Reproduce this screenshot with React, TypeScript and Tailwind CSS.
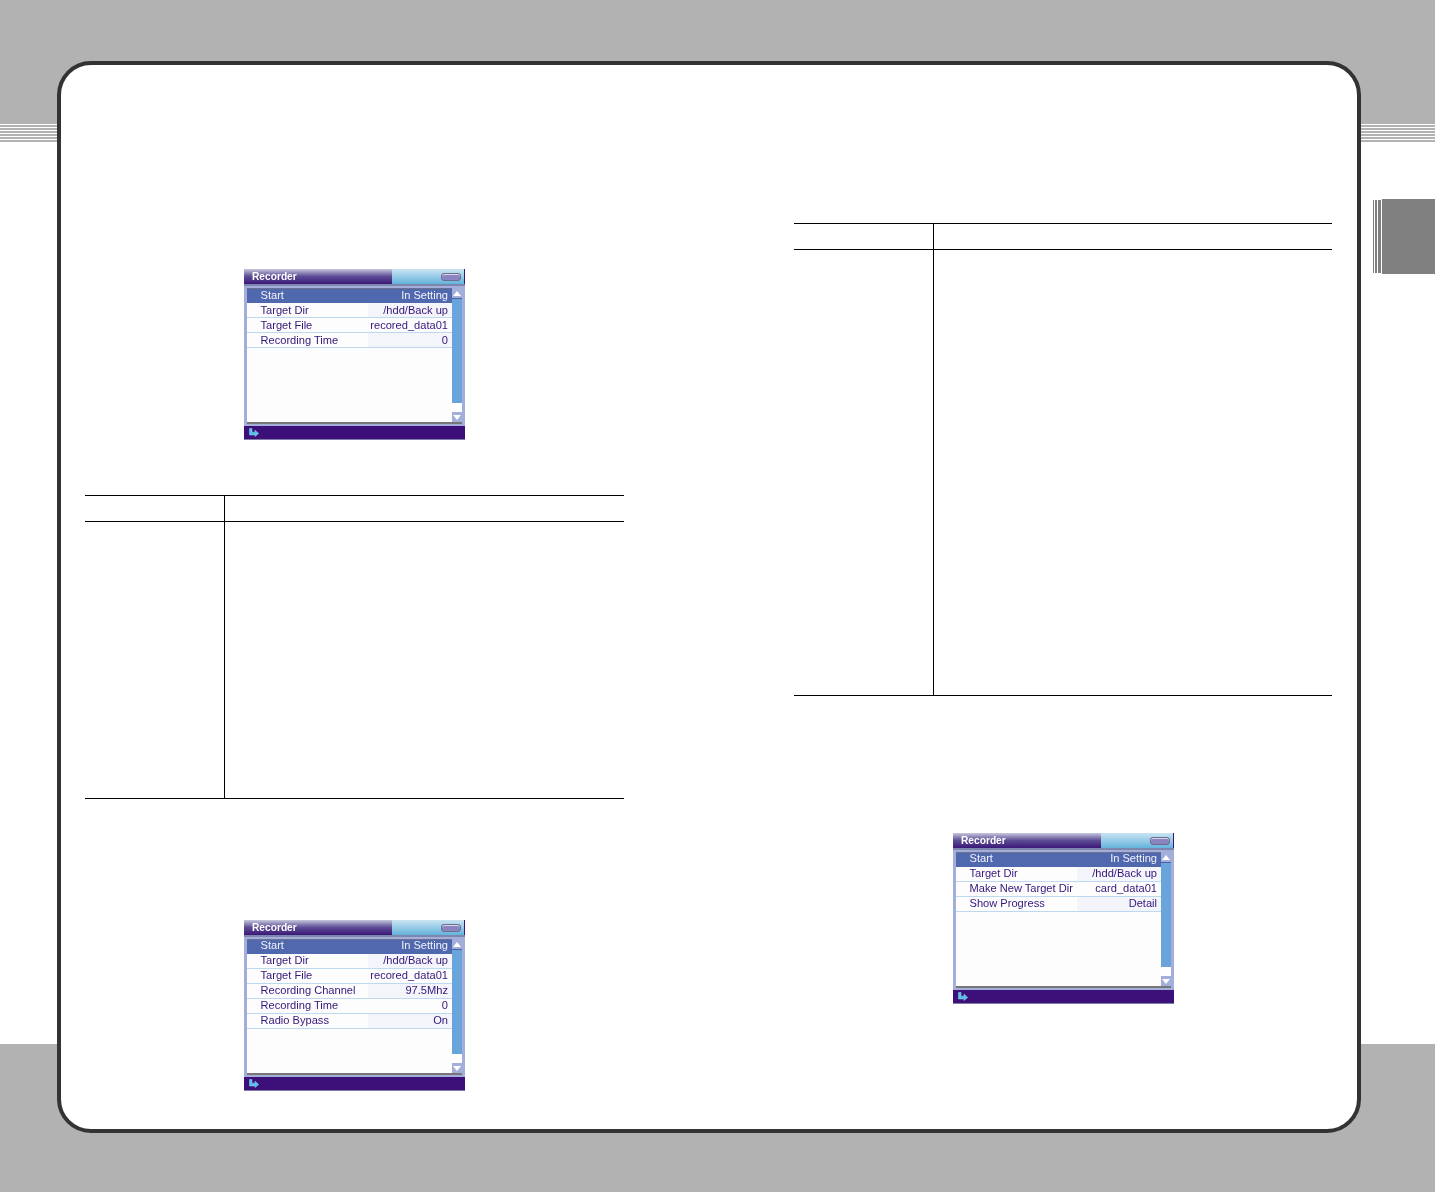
import React from "react";

type Row = [string, string];

function ArrowIcon() {
  return (
    <svg width="10" height="9" viewBox="0 0 10 9" className="shrink-0">
      <path d="M0.5 0.5H3V4.2H6V2.2L9.7 5.4L6 8.5V7H0.5Z" fill="#58c0ea" stroke="#8fd8f2" strokeWidth="0.5" />
    </svg>
  );
}

function Battery() {
  return (
    <div className="w-[20px] h-[8px] rounded-[3px] border border-[#6d6d8d] bg-[#8a84c0] shadow-[inset_0_1px_0_#d8d8ea]" />
  );
}

function ScrollArrow({ up }: { up: boolean }) {
  return (
    <div className="h-[10px] w-[10px] bg-[#a3aeda] flex items-center justify-center">
      <svg width="8" height="5" viewBox="0 0 8 5">
        <path d={up ? "M4 0L8 5H0Z" : "M0 0H8L4 5Z"} fill="#ffffff" />
      </svg>
    </div>
  );
}

function Screen({ rows, lower = false }: { rows: Row[]; lower?: boolean }) {
  const leading = lower ? "leading-[14px]" : "leading-[13px]";
  return (
    <div className="w-[221px] h-[171px] flex flex-col bg-[#a3aeda] ml-[159px] font-['Liberation_Sans',Arial,sans-serif] blur-[0.4px]">
      <div className="h-[15px] flex shrink-0">
        <div className="w-[148px] pl-[8px] bg-gradient-to-b from-[#c8c8dc] via-[#5d4b94] to-[#3c1578] text-white font-bold text-[10.2px] leading-[16px]">
          Recorder
        </div>
        <div className="flex-1 flex items-center justify-end pr-[3px] bg-gradient-to-b from-[#c9e4f2] to-[#62b3dc] border-r border-[#3c1578]">
          <Battery />
        </div>
      </div>
      <div className="h-[2px] shrink-0 bg-[#7d86ad]" />
      <div className="mx-[1px] h-[138px] shrink-0 border-l border-r border-[#a3aeda] pl-[1px] pr-[1px] pt-[2px]">
        <div className="h-[135px] bg-[#fdfdfd] flex border-b border-[#777] shadow-[0_1px_0_#777]">
          <div className="w-[205px] flex flex-col">
            {rows.map(([label, value], i) => {
              const selected = i === 0;
              const shaded = i % 2 === 1;
              return (
                <div
                  key={label}
                  className={
                    (selected
                      ? "h-[15px] flex bg-[#4f68ae] text-[#f2f2fa] text-[11.1px] shadow-[inset_0_1px_0_#6a7090] "
                      : "h-[15px] flex border-b border-[#bcd9f0] text-[#35157a] text-[11.1px] ") + leading
                  }
                >
                  <div className="w-[121px] pl-[13.5px] whitespace-nowrap">{label}</div>
                  <div className={shaded ? "flex-1 bg-[#f3f5fb] pr-[4px] text-right whitespace-nowrap" : "flex-1 pr-[4px] text-right whitespace-nowrap"}>
                    {value}
                  </div>
                </div>
              );
            })}
          </div>
          <div className="w-[10px] flex flex-col">
            <ScrollArrow up />
            <div className="h-[105px] bg-[#69a5da] border-t border-[#4d5fa5]" />
            <div className="h-[9px] bg-white" />
            <ScrollArrow up={false} />
          </div>
        </div>
      </div>
      <div className="mt-auto h-[14px] shrink-0 bg-[#3d0f78] flex items-center pl-[5px] pb-[1px] border-b border-[#7d7da5]">
        <ArrowIcon />
      </div>
    </div>
  );
}

function BlankTable({ height, width }: { height: string; width: string }) {
  return (
    <div className={`${width} flex flex-col border-t border-b border-black ${height}`}>
      <div className="h-[26px] shrink-0 flex border-b border-black">
        <div className="w-[140px] border-r border-black" />
        <div className="flex-1" />
      </div>
      <div className="flex-1 flex">
        <div className="w-[140px] border-r border-black" />
        <div className="flex-1" />
      </div>
    </div>
  );
}

export default function App() {
  return (
    <div className="relative w-[1435px] h-[1192px] overflow-hidden bg-white flex flex-col">
      <div className="h-[124px] shrink-0 bg-[#b2b2b2]" />
      <div className="h-[19px] shrink-0 bg-[repeating-linear-gradient(to_bottom,#ffffff_0px,#ffffff_1px,#b2b2b2_1px,#b2b2b2_3px)]" />
      <div className="flex-1" />
      <div className="h-[148px] shrink-0 bg-[#b2b2b2]" />

      <div className="absolute left-[57px] top-[61px] w-[1304px] h-[1072px] bg-white border-4 border-[#333333] rounded-[34px] pl-[24px] flex gap-[170px]">
        <div className="w-[539px] pt-[204px] flex flex-col">
          <Screen
            lower
            rows={[
              ["Start", "In Setting"],
              ["Target Dir", "/hdd/Back up"],
              ["Target File", "recored_data01"],
              ["Recording Time", "0"],
            ]}
          />
          <div className="mt-[55px]">
            <BlankTable height="h-[304px]" width="w-[539px]" />
          </div>
          <div className="mt-[121px]">
            <Screen
              rows={[
                ["Start", "In Setting"],
                ["Target Dir", "/hdd/Back up"],
                ["Target File", "recored_data01"],
                ["Recording Channel", "97.5Mhz"],
                ["Recording Time", "0"],
                ["Radio Bypass", "On"],
              ]}
            />
          </div>
        </div>
        <div className="w-[539px] pt-[158px] flex flex-col">
          <BlankTable height="h-[473px]" width="w-[538px]" />
          <div className="mt-[137px]">
            <Screen
              rows={[
                ["Start", "In Setting"],
                ["Target Dir", "/hdd/Back up"],
                ["Make New Target Dir", "card_data01"],
                ["Show Progress", "Detail"],
              ]}
            />
          </div>
        </div>
      </div>

      <div className="absolute left-[1373px] top-[199px] w-[62px] h-[75px] flex items-stretch">
        <div className="w-[1px] my-[1px] bg-[#808080]" />
        <div className="w-[2px] my-[1px] ml-[1px] bg-[#808080]" />
        <div className="w-[3px] my-[1px] ml-[1px] bg-[#808080]" />
        <div className="flex-1 ml-[1px] bg-[#808080]" />
      </div>
    </div>
  );
}
